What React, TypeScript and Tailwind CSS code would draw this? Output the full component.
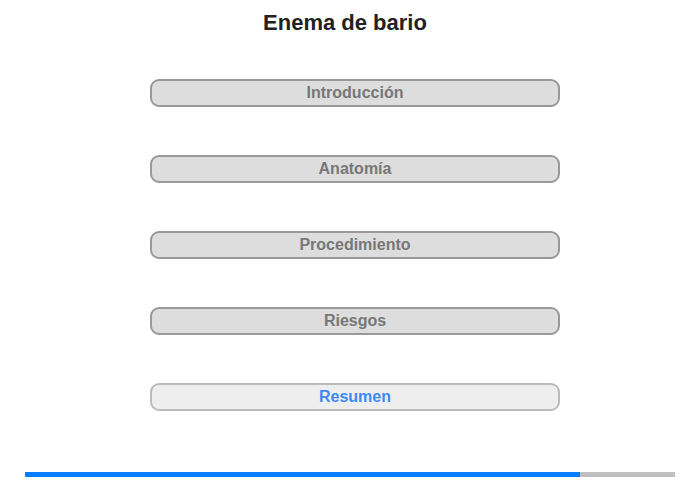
import React from "react";

const SECTIONS = [
  { label: "Introducción", active: false },
  { label: "Anatomía", active: false },
  { label: "Procedimiento", active: false },
  { label: "Riesgos", active: false },
  { label: "Resumen", active: true },
];

export default function App() {
  return (
    <div className="w-[700px] h-[480px] bg-white flex flex-col items-center" style={{ fontFamily: '"Liberation Sans", Arial, sans-serif' }}>
      {/* Title */}
      <h1 className="pt-[9px] h-[79px] pr-[10px] text-[22px] leading-[28px] font-bold text-[#222]">Enema de bario</h1>

      {/* Section buttons */}
      <div className="flex flex-col gap-[48px] pl-[10px]">
        {SECTIONS.map((s) => (
          <button
            key={s.label}
            className={
              s.active
                ? "w-[410px] h-[28px] rounded-[9px] border-2 border-[#bbbbbb] bg-[#eeeeee] text-[16px] font-bold text-[#3d8af7] leading-none"
                : "w-[410px] h-[28px] rounded-[9px] border-2 border-[#999999] bg-[#dddddd] text-[16px] font-bold text-[#777777] leading-none"
            }
          >
            {s.label}
          </button>
        ))}
      </div>

      {/* Progress */}
      <div className="mt-[61px] w-[650px] h-[5px] bg-[#c0c0c0] flex">
        <div className="h-full bg-[#0a7cff]" style={{ width: 555 }} />
      </div>
    </div>
  );
}
